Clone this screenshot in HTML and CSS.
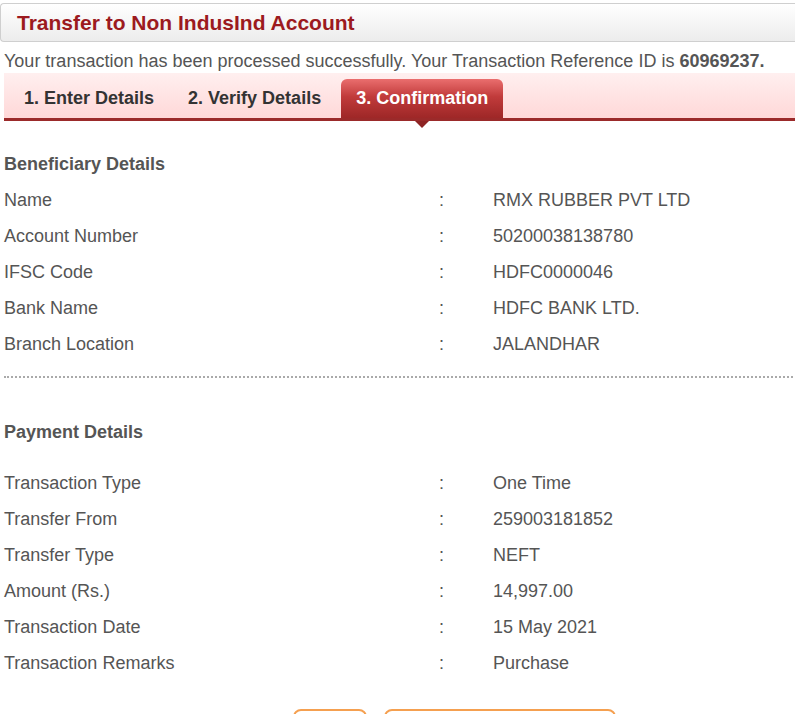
FILE: index.html
```html
<!DOCTYPE html>
<html>
<head>
<meta charset="utf-8">
<link rel="stylesheet" href="styles.css">
</head>
<body>
<div class="page">
  <div class="header"><h1 class="title">Transfer to Non IndusInd Account</h1></div>
  <p class="msg">Your transaction has been processed successfully. Your Transaction Reference ID is <b>60969237.</b></p>
  <div class="tabs">
    <div class="tab">1. Enter Details</div>
    <div class="tab">2. Verify Details</div>
    <div class="tab active">3. Confirmation</div>
  </div>

  <h2 class="section first">Beneficiary Details</h2>
  <div class="rows">
    <div class="row"><span class="lbl">Name</span><span class="colon">:</span><span class="val">RMX RUBBER PVT LTD</span></div>
    <div class="row"><span class="lbl">Account Number</span><span class="colon">:</span><span class="val">50200038138780</span></div>
    <div class="row"><span class="lbl">IFSC Code</span><span class="colon">:</span><span class="val">HDFC0000046</span></div>
    <div class="row"><span class="lbl">Bank Name</span><span class="colon">:</span><span class="val">HDFC BANK LTD.</span></div>
    <div class="row"><span class="lbl">Branch Location</span><span class="colon">:</span><span class="val">JALANDHAR</span></div>
  </div>
  <div class="divider"></div>

  <h2 class="section second">Payment Details</h2>
  <div class="rows">
    <div class="row"><span class="lbl">Transaction Type</span><span class="colon">:</span><span class="val">One Time</span></div>
    <div class="row"><span class="lbl">Transfer From</span><span class="colon">:</span><span class="val">259003181852</span></div>
    <div class="row"><span class="lbl">Transfer Type</span><span class="colon">:</span><span class="val">NEFT</span></div>
    <div class="row"><span class="lbl">Amount (Rs.)</span><span class="colon">:</span><span class="val">14,997.00</span></div>
    <div class="row"><span class="lbl">Transaction Date</span><span class="colon">:</span><span class="val">15 May 2021</span></div>
    <div class="row"><span class="lbl">Transaction Remarks</span><span class="colon">:</span><span class="val">Purchase</span></div>
  </div>

  <div class="buttons">
    <div class="btn small"></div>
    <div class="btn large"></div>
  </div>
</div>
</body>
</html>
```
FILE: styles.css
```css
html, body {
  margin: 0;
  padding: 0;
  background: #fff;
  overflow: hidden;
}
.page {
  font-family: "Liberation Sans", Arial, sans-serif;
  color: #555;
  width: 795px;
  height: 714px;
  overflow: hidden;
  padding-top: 3px;
  box-sizing: border-box;
}
.header {
  height: 39px;
  border: 1px solid #cfcfcf;
  border-right: none;
  border-radius: 4px 0 0 4px;
  background: linear-gradient(#ffffff, #ececec);
  display: flex;
  align-items: center;
  padding-left: 16px;
  box-sizing: border-box;
  width: 801px;
}
.title {
  margin: 0;
  font-size: 21px;
  font-weight: bold;
  color: #9c1a1e;
}
.msg {
  margin: 0;
  padding: 7px 0 0 4px;
  height: 24px;
  font-size: 18px;
  line-height: 24px;
  color: #555;
  white-space: nowrap;
}
.msg b { color: #555; }
.tabs {
  margin-left: 4px;
  height: 48px;
  box-sizing: border-box;
  border-bottom: 3px solid #9b2a2a;
  background: linear-gradient(#ffefef, #ffd8d8);
  display: flex;
  align-items: flex-end;
  padding-left: 20px;
  position: relative;
}
.tab {
  font-size: 18px;
  font-weight: bold;
  color: #333;
  height: 39px;
  line-height: 38px;
  margin-right: 34px;
}
.tab:nth-child(2) { margin-right: 20px; }
.tab.active {
  position: relative;
  padding: 0 15px;
  color: #fff;
  border-radius: 6px 6px 0 0;
  background: linear-gradient(#ea6e6e, #c13b3b 45%, #9e2727);
}
.tab.active::after {
  content: "";
  position: absolute;
  left: 50%;
  top: 100%;
  margin-left: -7px;
  margin-top: 3px;
  border-left: 7px solid transparent;
  border-right: 7px solid transparent;
  border-top: 7px solid #8e2424;
}
.section {
  margin: 0;
  padding-left: 4px;
  font-size: 18px;
  font-weight: bold;
  color: #555;
  line-height: 20px;
}
.section.first { padding-top: 33px; padding-bottom: 8px; }
.section.second { padding-top: 44px; padding-bottom: 23px; }
.row {
  display: flex;
  height: 36px;
  line-height: 36px;
  font-size: 18px;
  color: #555;
}
.lbl { width: 435px; padding-left: 4px; }
.colon { width: 54px; }
.divider {
  margin: 14px 2px 0 4px;
  border-top: 2px dotted #aaa;
}
.buttons {
  display: flex;
  padding-left: 293px;
  gap: 17px;
  margin-top: 28px;
}
.btn {
  height: 30px;
  border: 2px solid #f5a050;
  border-radius: 8px;
  background: #fff;
  box-sizing: border-box;
}
.btn.small { width: 74px; }
.btn.large { width: 232px; }
```
